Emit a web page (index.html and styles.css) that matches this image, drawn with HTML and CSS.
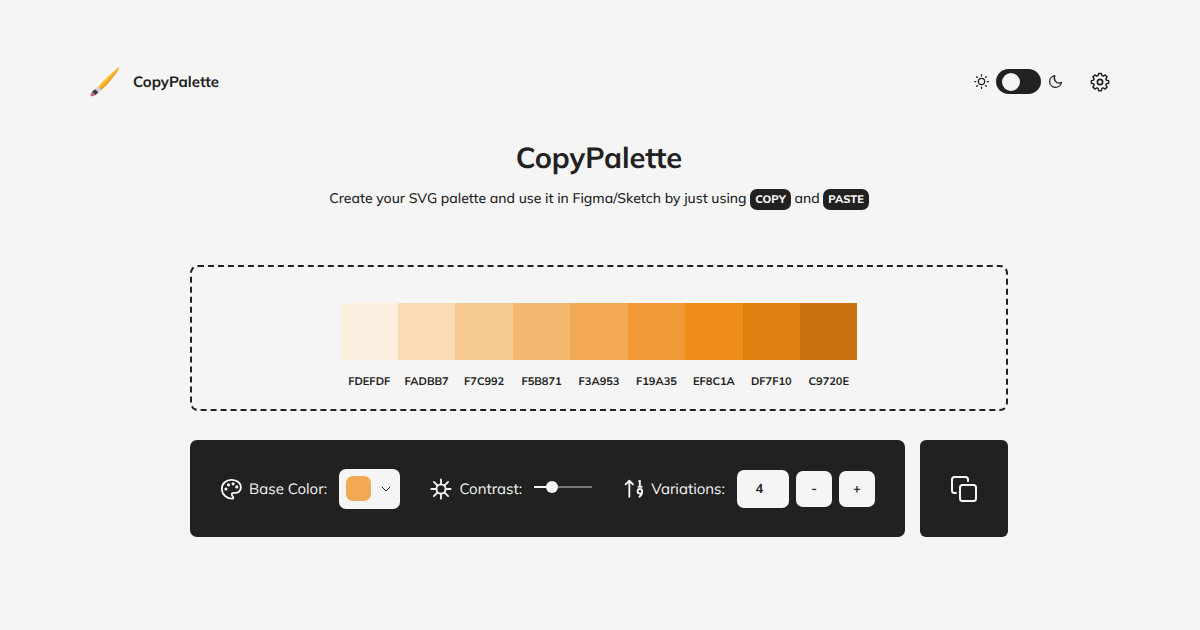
FILE: index.html
```html
<!DOCTYPE html>
<html lang="en">
<head>
<meta charset="utf-8">
<meta name="viewport" content="width=device-width, initial-scale=1">
<title>CopyPalette</title>
<link rel="stylesheet" href="styles.css">
</head>
<body>
<header class="header">
  <a class="brand" href="#">
    <svg class="brand-logo" viewBox="0 0 32 32" aria-hidden="true">
      <defs><linearGradient id="body" x1=".3" y1=".3" x2=".7" y2=".7"><stop offset=".3" stop-color="#ffcf3e"/><stop offset=".7" stop-color="#e8951c"/></linearGradient></defs>
      <path d="M31.200 .6C31.600 1.500 29 5.500 25 10.500C21 16 16 21.500 12 24.500L8.500 21C12 17 17 12 21.500 8C26 4 30.200 .2 31.200 .6Z" fill="url(#body)"/>
      <path d="M8.500 20.800L12.200 24.600L9 27.300L5.500 23.800Z" fill="#cfd1d8"/>
      <path d="M5.500 23.800L9 27.300L5.500 30L1.800 26.500Z" fill="#463844"/>
      <path d="M2 26.800L5.300 30Q3.200 31.900 1 30.900Q-.6 29 2 26.800Z" fill="#dc5b84"/>
    </svg>
    <span>CopyPalette</span>
  </a>
  <div class="header-tools">
    <label class="theme">
      <svg class="icon-theme" viewBox="0 0 24 24" aria-hidden="true"><circle cx="12" cy="12" r="5"/><path d="M12 1v2M12 21v2M1 12h2M21 12h2M4.300 4.300l1.200 1.200M18.500 18.500l1.200 1.200M4.300 19.700l1.200-1.200M18.500 5.500l1.200-1.200"/></svg>
      <input class="switch" type="checkbox" role="switch" aria-label="Dark mode">
      <svg class="icon-theme" viewBox="0 0 24 24" aria-hidden="true"><path d="M11 2.500C7.500 9 13.500 17 21.500 13.500A9.500 9.500 0 1 1 11 2.500Z"/></svg>
    </label>
    <button class="settings" type="button" aria-label="Settings">
      <svg viewBox="0 0 24 24" aria-hidden="true"><circle cx="12" cy="12" r="3.200"/><path d="M10.200 1.500h3.600l.7 3 1.700.7 2.600-1.600 2.600 2.600-1.600 2.600.7 1.700 3 .7v3.600l-3 .7-.7 1.700 1.600 2.600-2.600 2.600-2.600-1.600-1.700.7-.7 3h-3.600l-.7-3-1.700-.7-2.600 1.600-2.600-2.600 1.600-2.600-.7-1.700-3-.7v-3.600l3-.7.7-1.700-1.600-2.600 2.600-2.600 2.600 1.600 1.700-.7z" transform="translate(1.200 .3) scale(.9)"/></svg>
    </button>
  </div>
</header>

<main class="main">
  <section class="hero">
    <h1>CopyPalette</h1>
    <p>Create your SVG palette and use it in Figma/Sketch by just using <kbd>COPY</kbd> and <kbd>PASTE</kbd></p>
  </section>

  <section class="preview" aria-label="Palette">
    <ul class="swatches">
      <li><span class="swatch c1"></span>FDEFDF</li>
      <li><span class="swatch c2"></span>FADBB7</li>
      <li><span class="swatch c3"></span>F7C992</li>
      <li><span class="swatch c4"></span>F5B871</li>
      <li><span class="swatch c5"></span>F3A953</li>
      <li><span class="swatch c6"></span>F19A35</li>
      <li><span class="swatch c7"></span>EF8C1A</li>
      <li><span class="swatch c8"></span>DF7F10</li>
      <li><span class="swatch c9"></span>C9720E</li>
    </ul>
  </section>

  <section class="controls">
    <div class="panel">
      <div class="field">
        <svg class="icon" viewBox="0 0 24 24" aria-hidden="true"><path d="M14.200 22.500C8 23 2.300 18.500 2 12.200C1.800 6 7 1.600 13 2C18.500 2.300 22.800 5.500 22.800 10C22.800 14.500 19.500 16.600 16 16.200C13.500 16 12.400 16.600 13 18.500C13.500 20 15.500 21.500 14.200 22.500Z"/><g class="dots"><circle cx="6.500" cy="12" r="1.700"/><circle cx="9.300" cy="7.500" r="1.700"/><circle cx="14.300" cy="6.400" r="1.700"/><circle cx="18.300" cy="9.700" r="1.700"/></g></svg>
        <span class="label" id="base-label">Base Color:</span>
        <button class="color" type="button" aria-labelledby="base-label">
          <span class="chip"></span>
          <svg class="chevron" viewBox="0 0 12 12" aria-hidden="true"><path d="M2 4l4 4 4-4"/></svg>
        </button>
      </div>
      <div class="field">
        <svg class="icon" viewBox="0 0 24 24" aria-hidden="true"><circle cx="12" cy="12" r="5"/><path d="M12 1.500V7M12 17v5.500M1.500 12H7M17 12h5.500M4.200 4.200l4 4M15.800 15.800l4 4M4.200 19.800l4-4M15.800 8.200l4-4"/></svg>
        <label class="label" for="contrast">Contrast:</label>
        <input class="range" id="contrast" type="range" min="0" max="100" value="26">
      </div>
      <div class="field">
        <svg class="icon" viewBox="0 0 24 24" aria-hidden="true"><path d="M8 20.500V3M4 7L8 3l4 4M18.500 3.500L19.500 3V9.500M18 9.500h3.500M22 14.500a2.500 2.500 0 1 1-5 0a2.500 2.500 0 1 1 5 0Q22.200 18 19 20.500"/></svg>
        <label class="label" for="variations">Variations:</label>
        <div class="stepper">
          <input class="count" id="variations" type="text" inputmode="numeric" value="4">
          <button class="step" type="button" aria-label="Fewer variations">-</button>
          <button class="step" type="button" aria-label="More variations">+</button>
        </div>
      </div>
    </div>
    <button class="copy" type="button" aria-label="Copy palette">
      <svg viewBox="0 0 28 28" aria-hidden="true"><rect x="10" y="10" width="16" height="16" rx="2.500"/><path d="M6 18H4.500A2.500 2.500 0 0 1 2 15.500v-11A2.500 2.500 0 0 1 4.500 2h11A2.500 2.500 0 0 1 18 4.500V6"/></svg>
    </button>
  </section>
</main>
</body>
</html>
```
FILE: styles.css
```css
* { box-sizing: border-box; }

body {
  margin: 0;
  background: #f5f5f5;
  color: #212121;
  font-family: Mulish, Muli, Lato, "Liberation Sans", sans-serif;
  font-size: 15px;
  line-height: 20px;
  text-rendering: geometricPrecision;
}

button, input { font: inherit; color: inherit; text-rendering: inherit; }
button { border: 0; padding: 0; cursor: pointer; }
svg { fill: none; stroke: currentColor; stroke-linecap: round; stroke-linejoin: round; flex: none; }

.header {
  display: flex;
  justify-content: space-between;
  align-items: center;
  padding: 64px 90px 0;
}
.brand {
  display: flex;
  align-items: center;
  gap: 13px;
  color: inherit;
  font-weight: 700;
  line-height: 32px;
  text-decoration: none;
}
.brand-logo { width: 30px; height: 30px; stroke: none; }
.header-tools { display: flex; align-items: center; gap: 27px; height: 35px; }
.theme { display: flex; align-items: center; gap: 7px; }
.icon-theme { width: 15px; height: 15px; stroke-width: 2; }
.switch {
  appearance: none;
  display: flex;
  align-items: center;
  width: 45px;
  height: 25px;
  margin: 0;
  padding: 0 6px;
  border-radius: 13px;
  background: #212121;
}
.switch::before {
  content: "";
  width: 18px;
  height: 18px;
  border-radius: 50%;
  background: #f5f5f5;
}
.switch:checked { justify-content: flex-end; }
.settings { display: flex; background: none; }
.settings svg { width: 20px; height: 20px; stroke-width: 2; }

.main { max-width: 820px; margin: 0 auto; padding: 0 2px 90px 0; }
.hero { padding: 40px 0 55px; text-align: center; }
.hero h1 { margin: 0; font-size: 29px; line-height: 38px; font-weight: 700; }
.hero p { margin: 10px 0 0; font-size: 14px; font-weight: 500; line-height: 22px; }
.hero kbd {
  display: inline-block;
  padding: 0 5px;
  border-radius: 7px;
  background: #212121;
  color: #f5f5f5;
  font-family: inherit;
  font-size: 11px;
  font-weight: 800;
  line-height: 21px;
}

.preview {
  padding: 36px 24px 20px;
  border: 2px dashed #212121;
  border-radius: 8px;
}
.swatches {
  display: grid;
  grid-template-columns: repeat(9, 1fr);
  max-width: 517px;
  margin: 0 auto;
  padding: 0;
  list-style: none;
  font-size: 11px;
  font-weight: 700;
  line-height: 16px;
  text-align: center;
}
.swatch { display: block; aspect-ratio: 1; margin-bottom: 13px; }
.c1 { background: #fdefdf; }
.c2 { background: #fadbb7; }
.c3 { background: #f7c992; }
.c4 { background: #f5b871; }
.c5 { background: #f3a953; }
.c6 { background: #f19a35; }
.c7 { background: #ef8c1a; }
.c8 { background: #df7f10; }
.c9 { background: #c9720e; }

.controls {
  display: grid;
  grid-template-columns: 1fr 88px;
  gap: 15px;
  margin-top: 29px;
}
.panel {
  display: flex;
  justify-content: space-between;
  align-items: center;
  padding: 28px 30px;
  border-radius: 7px;
  background: #212121;
  color: #f5f5f5;
}
.field { display: flex; align-items: center; height: 41px; }
.icon { width: 22px; height: 22px; margin-right: 7px; stroke-width: 2; }
.dots { fill: currentColor; stroke: none; }
.label { margin-right: 12px; white-space: nowrap; }
.color {
  display: flex;
  align-items: center;
  justify-content: space-between;
  width: 61px;
  height: 40px;
  padding: 0 8px 0 7px;
  border-radius: 7px;
  background: #f5f5f5;
  color: #212121;
}
.chip { width: 25px; height: 25px; border-radius: 7px; background: #f3a953; }
.chevron { width: 12px; height: 12px; }
.range { appearance: none; width: 58px; height: 12px; margin: 0 0 4px; background: none; }
.range::-webkit-slider-runnable-track {
  height: 2px;
  background: linear-gradient(90deg, #f5f5f5 30%, #757575 30%);
}
.range::-webkit-slider-thumb {
  appearance: none;
  width: 12px;
  height: 12px;
  margin-top: -5px;
  border-radius: 50%;
  background: #f5f5f5;
}
.stepper { display: flex; align-items: center; gap: 7px; }
.count, .step {
  width: 36px;
  height: 36px;
  border: 0;
  border-radius: 7px;
  background: #f5f5f5;
  color: #212121;
  font-size: 13px;
  font-weight: 700;
  text-align: center;
}
.count { width: 52px; height: 38px; padding: 0 14px 0 7px; }
.copy {
  display: flex;
  align-items: center;
  justify-content: center;
  border-radius: 6px;
  background: #212121;
  color: #f5f5f5;
}
.copy svg { width: 28px; height: 28px; stroke-width: 2; }
```
